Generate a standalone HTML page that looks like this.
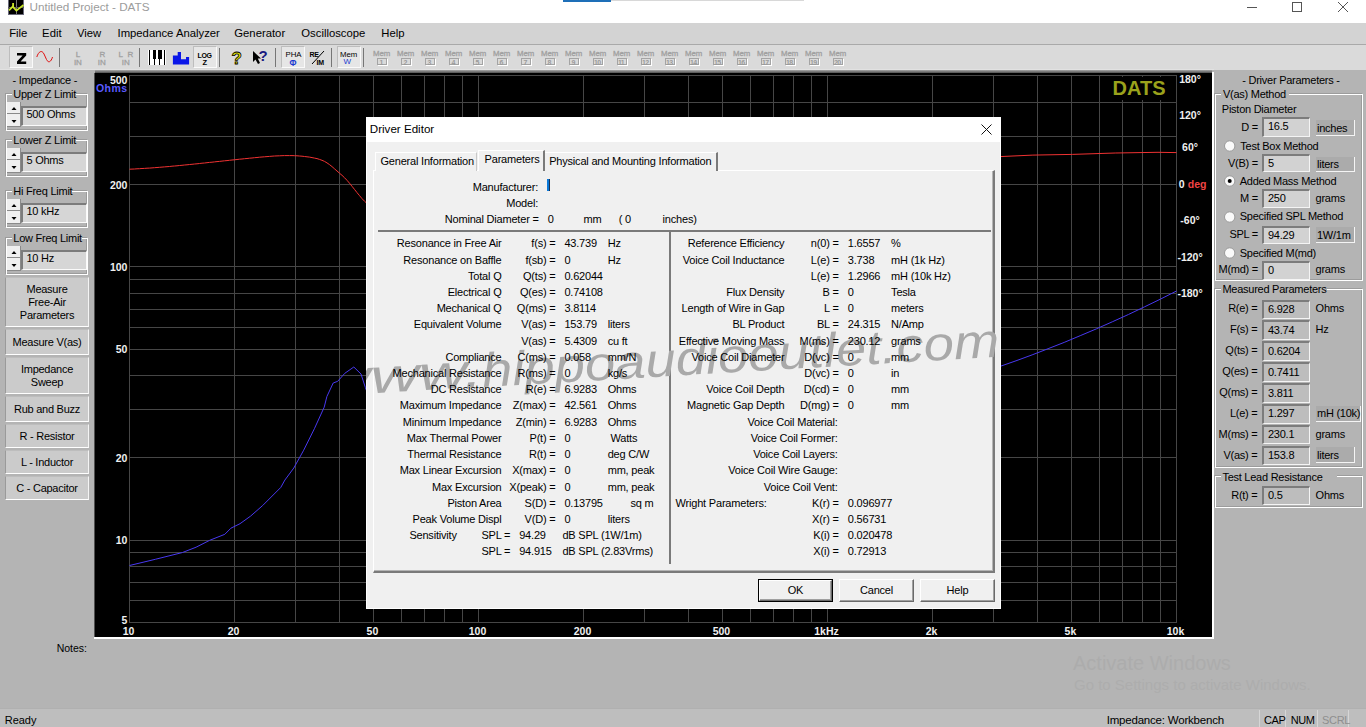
<!DOCTYPE html><html><head><meta charset="utf-8"><style>
html,body{margin:0;padding:0;}
body{width:1366px;height:727px;overflow:hidden;position:relative;background:#b4b4b4;font-family:"Liberation Sans",sans-serif;}
.t{position:absolute;white-space:nowrap;line-height:1;}
.r{position:absolute;box-sizing:border-box;}
svg{position:absolute;}
</style></head><body>
<div class="r" style="left:0px;top:0px;width:1366px;height:23px;background:#fff;"></div>
<svg style="left:8px;top:0px" width="16" height="15"><rect x="0.5" y="-1" width="15" height="15.5" fill="#000" stroke="#6a6a7a" stroke-width="1"/><line x1="8.5" y1="0" x2="8.5" y2="14" stroke="#777" stroke-width="1"/><line x1="0" y1="7.5" x2="16" y2="7.5" stroke="#555" stroke-width="1"/><polyline points="1,10.3 4.7,6.6 8.4,10.6 15.5,5" fill="none" stroke="#c8e628" stroke-width="1.7"/><rect x="4.2" y="3" width="1.8" height="4" fill="#c8e628"/></svg>
<div class="t" style="top:1.40px;font-size:11.7px;color:#9c9c9c;left:29.50px;">Untitled Project - DATS</div>
<div class="r" style="left:563px;top:0px;width:48px;height:2px;background:#1e6fb8;"></div>
<div class="r" style="left:611px;top:0px;width:193px;height:1px;background:#d8d8d8;"></div>
<svg style="left:1240px;top:0px" width="120" height="16"><line x1="7" y1="7.5" x2="17" y2="7.5" stroke="#555" stroke-width="1"/><rect x="52.5" y="2.5" width="9" height="9" fill="none" stroke="#555" stroke-width="1"/><line x1="98" y1="2" x2="108" y2="12" stroke="#555" stroke-width="1"/><line x1="108" y1="2" x2="98" y2="12" stroke="#555" stroke-width="1"/></svg>
<div class="r" style="left:0px;top:23px;width:1366px;height:21px;background:#d3d3d3;"></div>
<div class="r" style="left:0px;top:44px;width:1366px;height:1px;background:#a9a9a9;"></div>
<div class="t" style="top:27.83px;font-size:11.3px;color:#000;left:9.20px;">File</div>
<div class="t" style="top:27.83px;font-size:11.3px;color:#000;left:42.10px;">Edit</div>
<div class="t" style="top:27.83px;font-size:11.3px;color:#000;left:76.90px;">View</div>
<div class="t" style="top:27.83px;font-size:11.3px;color:#000;left:117.50px;">Impedance Analyzer</div>
<div class="t" style="top:27.83px;font-size:11.3px;color:#000;left:234.30px;">Generator</div>
<div class="t" style="top:27.83px;font-size:11.3px;color:#000;left:301.30px;">Oscilloscope</div>
<div class="t" style="top:27.83px;font-size:11.3px;color:#000;left:381.30px;">Help</div>
<div class="r" style="left:0px;top:45px;width:1366px;height:25px;background:#dadada;"></div>
<div class="r" style="left:0px;top:69px;width:1214px;height:1px;background:#e2e2e2;"></div>
<div class="r" style="left:9px;top:46px;width:24px;height:22px;background:#e6e6e6;border-top:1px solid #bdbdbd;border-left:1px solid #bdbdbd;border-right:1px solid #fafafa;border-bottom:1px solid #fafafa;"></div>
<svg style="left:16px;top:52px" width="12" height="13"><path d="M1,1 L10.2,1 L10.2,3.6 L4.6,9.6 L10.2,9.6 L10.2,12 L1,12 L1,9.4 L6.6,3.4 L1,3.4 Z" fill="#000"/></svg>
<svg style="left:36px;top:50px" width="18" height="14"><path d="M0.8,7 C2.5,1.5 5.8,-0.5 8,4 L10.5,9.5 C12.5,13.5 15,12 16.5,7" fill="none" stroke="#e01010" stroke-width="1"/></svg>
<div class="r" style="left:59px;top:48px;width:1px;height:19px;background:#767676;"></div>
<div class="t" style="top:50.63px;font-size:8px;color:#a0a0a0;left:75.80px;-webkit-text-stroke:0.3px #a0a0a0;">L</div>
<div class="t" style="top:58.53px;font-size:8px;color:#a0a0a0;left:73.90px;-webkit-text-stroke:0.3px #a0a0a0;">IN</div>
<div class="t" style="top:50.63px;font-size:8px;color:#a0a0a0;left:99.50px;-webkit-text-stroke:0.3px #a0a0a0;">R</div>
<div class="t" style="top:58.53px;font-size:8px;color:#a0a0a0;left:97.70px;-webkit-text-stroke:0.3px #a0a0a0;">IN</div>
<div class="t" style="top:50.63px;font-size:8px;color:#a0a0a0;left:118.50px;-webkit-text-stroke:0.3px #a0a0a0;">L&nbsp;&nbsp;R</div>
<div class="t" style="top:58.53px;font-size:8px;color:#a0a0a0;left:121.70px;-webkit-text-stroke:0.3px #a0a0a0;">IN</div>
<div class="r" style="left:139px;top:48px;width:1px;height:19px;background:#767676;"></div>
<svg style="left:148px;top:49px" width="18" height="17" shape-rendering="crispEdges"><rect x="0" y="1" width="18" height="15" fill="#fff"/><rect x="0.7" y="1" width="1.5" height="15" fill="#000"/><rect x="15.5" y="1" width="1.8" height="15" fill="#000"/><rect x="5" y="1" width="3.3" height="9" fill="#000"/><rect x="10.2" y="1" width="3.3" height="9" fill="#000"/><rect x="6.2" y="9" width="1" height="7" fill="#000"/><rect x="11.4" y="9" width="1" height="7" fill="#000"/></svg>
<svg style="left:172px;top:51px" width="18" height="15"><path d="M0.9,13.5 L0.9,4.4 L5.7,4.4 L5.7,1.1 L9,1.1 L9,8.2 L14,8.2 L14,5.9 L17.1,5.9 L17.1,13.5 Z" fill="#0a16e8"/></svg>
<div class="r" style="left:193px;top:46px;width:24px;height:22px;background:#e6e6e6;border-top:1px solid #bdbdbd;border-left:1px solid #bdbdbd;border-right:1px solid #fafafa;border-bottom:1px solid #fafafa;"></div>
<div class="t" style="top:52.27px;font-size:7px;color:#000;font-weight:700;letter-spacing:-0.3px;left:197.50px;">LOG</div>
<div class="t" style="top:58.75px;font-size:7.5px;color:#000;font-weight:700;left:202.50px;">Z</div>
<div class="r" style="left:219px;top:48px;width:1px;height:19px;background:#767676;"></div>
<div class="t" style="top:49.51px;font-size:17px;color:#e6e600;font-weight:700;left:231.50px;-webkit-text-stroke:0.8px #000;">?</div>
<svg style="left:252px;top:50px" width="17" height="15"><path d="M1,1 L1,12 L3.5,9.5 L6,14 L8,13 L5.8,8.5 L9,8.5 Z" fill="#000"/></svg>
<div class="t" style="top:48.30px;font-size:15px;color:#1a1a80;font-weight:700;left:258.50px;">?</div>
<div class="r" style="left:275px;top:48px;width:1px;height:19px;background:#767676;"></div>
<div class="r" style="left:281px;top:46px;width:24px;height:22px;background:#e6e6e6;border-top:1px solid #bdbdbd;border-left:1px solid #bdbdbd;border-right:1px solid #fafafa;border-bottom:1px solid #fafafa;"></div>
<div class="t" style="top:51.10px;font-size:7.8px;color:#000;left:285.50px;">PHA</div>
<div class="t" style="top:58.50px;font-size:8.5px;color:#1a3ad0;font-weight:700;left:289.50px;">Φ</div>
<svg style="left:309px;top:50px" width="18" height="16"><line x1="3" y1="14" x2="15" y2="1" stroke="#000" stroke-width="1"/></svg>
<div class="t" style="top:51.37px;font-size:7px;color:#000;font-weight:700;letter-spacing:-0.3px;left:309.50px;">RE</div>
<div class="t" style="top:59.17px;font-size:7px;color:#000;font-weight:700;letter-spacing:-0.3px;left:316.50px;">IM</div>
<div class="r" style="left:331px;top:48px;width:1px;height:19px;background:#767676;"></div>
<div class="r" style="left:337px;top:46px;width:24px;height:22px;background:#e6e6e6;border-top:1px solid #bdbdbd;border-left:1px solid #bdbdbd;border-right:1px solid #fafafa;border-bottom:1px solid #fafafa;"></div>
<div class="t" style="top:51.10px;font-size:7.8px;color:#000;left:340.00px;">Mem</div>
<div class="t" style="top:58.33px;font-size:8px;color:#1a3ad0;left:343.50px;">W</div>
<div class="r" style="left:363px;top:48px;width:1px;height:19px;background:#767676;"></div>
<div class="t" style="top:49.90px;font-size:7.8px;color:#a0a0a0;left:372.90px;-webkit-text-stroke:0.3px #a0a0a0;">Mem</div>
<div class="r" style="left:376.9px;top:57.8px;width:10px;height:7px;border:1px solid #a4a4a4;box-shadow:1px 1px 0 #fff;"></div>
<div class="t" style="top:58.77px;font-size:7px;color:#9a9a9a;font-weight:700;letter-spacing:-0.6px;left:379.50px;">1</div>
<div class="t" style="top:49.90px;font-size:7.8px;color:#a0a0a0;left:396.90px;-webkit-text-stroke:0.3px #a0a0a0;">Mem</div>
<div class="r" style="left:400.9px;top:57.8px;width:10px;height:7px;border:1px solid #a4a4a4;box-shadow:1px 1px 0 #fff;"></div>
<div class="t" style="top:58.77px;font-size:7px;color:#9a9a9a;font-weight:700;letter-spacing:-0.6px;left:403.50px;">2</div>
<div class="t" style="top:49.90px;font-size:7.8px;color:#a0a0a0;left:420.90px;-webkit-text-stroke:0.3px #a0a0a0;">Mem</div>
<div class="r" style="left:424.9px;top:57.8px;width:10px;height:7px;border:1px solid #a4a4a4;box-shadow:1px 1px 0 #fff;"></div>
<div class="t" style="top:58.77px;font-size:7px;color:#9a9a9a;font-weight:700;letter-spacing:-0.6px;left:427.50px;">3</div>
<div class="t" style="top:49.90px;font-size:7.8px;color:#a0a0a0;left:444.90px;-webkit-text-stroke:0.3px #a0a0a0;">Mem</div>
<div class="r" style="left:448.9px;top:57.8px;width:10px;height:7px;border:1px solid #a4a4a4;box-shadow:1px 1px 0 #fff;"></div>
<div class="t" style="top:58.77px;font-size:7px;color:#9a9a9a;font-weight:700;letter-spacing:-0.6px;left:451.50px;">4</div>
<div class="t" style="top:49.90px;font-size:7.8px;color:#a0a0a0;left:468.90px;-webkit-text-stroke:0.3px #a0a0a0;">Mem</div>
<div class="r" style="left:472.9px;top:57.8px;width:10px;height:7px;border:1px solid #a4a4a4;box-shadow:1px 1px 0 #fff;"></div>
<div class="t" style="top:58.77px;font-size:7px;color:#9a9a9a;font-weight:700;letter-spacing:-0.6px;left:475.50px;">5</div>
<div class="t" style="top:49.90px;font-size:7.8px;color:#a0a0a0;left:492.90px;-webkit-text-stroke:0.3px #a0a0a0;">Mem</div>
<div class="r" style="left:496.9px;top:57.8px;width:10px;height:7px;border:1px solid #a4a4a4;box-shadow:1px 1px 0 #fff;"></div>
<div class="t" style="top:58.77px;font-size:7px;color:#9a9a9a;font-weight:700;letter-spacing:-0.6px;left:499.50px;">6</div>
<div class="t" style="top:49.90px;font-size:7.8px;color:#a0a0a0;left:516.90px;-webkit-text-stroke:0.3px #a0a0a0;">Mem</div>
<div class="r" style="left:520.9px;top:57.8px;width:10px;height:7px;border:1px solid #a4a4a4;box-shadow:1px 1px 0 #fff;"></div>
<div class="t" style="top:58.77px;font-size:7px;color:#9a9a9a;font-weight:700;letter-spacing:-0.6px;left:523.50px;">7</div>
<div class="t" style="top:49.90px;font-size:7.8px;color:#a0a0a0;left:540.90px;-webkit-text-stroke:0.3px #a0a0a0;">Mem</div>
<div class="r" style="left:544.9px;top:57.8px;width:10px;height:7px;border:1px solid #a4a4a4;box-shadow:1px 1px 0 #fff;"></div>
<div class="t" style="top:58.77px;font-size:7px;color:#9a9a9a;font-weight:700;letter-spacing:-0.6px;left:547.50px;">8</div>
<div class="t" style="top:49.90px;font-size:7.8px;color:#a0a0a0;left:564.90px;-webkit-text-stroke:0.3px #a0a0a0;">Mem</div>
<div class="r" style="left:568.9px;top:57.8px;width:10px;height:7px;border:1px solid #a4a4a4;box-shadow:1px 1px 0 #fff;"></div>
<div class="t" style="top:58.77px;font-size:7px;color:#9a9a9a;font-weight:700;letter-spacing:-0.6px;left:571.50px;">9</div>
<div class="t" style="top:49.90px;font-size:7.8px;color:#a0a0a0;left:588.90px;-webkit-text-stroke:0.3px #a0a0a0;">Mem</div>
<div class="r" style="left:592.9px;top:57.8px;width:10px;height:7px;border:1px solid #a4a4a4;box-shadow:1px 1px 0 #fff;"></div>
<div class="t" style="top:58.77px;font-size:7px;color:#9a9a9a;font-weight:700;letter-spacing:-0.6px;left:593.90px;">10</div>
<div class="t" style="top:49.90px;font-size:7.8px;color:#a0a0a0;left:612.90px;-webkit-text-stroke:0.3px #a0a0a0;">Mem</div>
<div class="r" style="left:616.9px;top:57.8px;width:10px;height:7px;border:1px solid #a4a4a4;box-shadow:1px 1px 0 #fff;"></div>
<div class="t" style="top:58.77px;font-size:7px;color:#9a9a9a;font-weight:700;letter-spacing:-0.6px;left:617.90px;">11</div>
<div class="t" style="top:49.90px;font-size:7.8px;color:#a0a0a0;left:636.90px;-webkit-text-stroke:0.3px #a0a0a0;">Mem</div>
<div class="r" style="left:640.9px;top:57.8px;width:10px;height:7px;border:1px solid #a4a4a4;box-shadow:1px 1px 0 #fff;"></div>
<div class="t" style="top:58.77px;font-size:7px;color:#9a9a9a;font-weight:700;letter-spacing:-0.6px;left:641.90px;">12</div>
<div class="t" style="top:49.90px;font-size:7.8px;color:#a0a0a0;left:660.90px;-webkit-text-stroke:0.3px #a0a0a0;">Mem</div>
<div class="r" style="left:664.9px;top:57.8px;width:10px;height:7px;border:1px solid #a4a4a4;box-shadow:1px 1px 0 #fff;"></div>
<div class="t" style="top:58.77px;font-size:7px;color:#9a9a9a;font-weight:700;letter-spacing:-0.6px;left:665.90px;">13</div>
<div class="t" style="top:49.90px;font-size:7.8px;color:#a0a0a0;left:684.90px;-webkit-text-stroke:0.3px #a0a0a0;">Mem</div>
<div class="r" style="left:688.9px;top:57.8px;width:10px;height:7px;border:1px solid #a4a4a4;box-shadow:1px 1px 0 #fff;"></div>
<div class="t" style="top:58.77px;font-size:7px;color:#9a9a9a;font-weight:700;letter-spacing:-0.6px;left:689.90px;">14</div>
<div class="t" style="top:49.90px;font-size:7.8px;color:#a0a0a0;left:708.90px;-webkit-text-stroke:0.3px #a0a0a0;">Mem</div>
<div class="r" style="left:712.9px;top:57.8px;width:10px;height:7px;border:1px solid #a4a4a4;box-shadow:1px 1px 0 #fff;"></div>
<div class="t" style="top:58.77px;font-size:7px;color:#9a9a9a;font-weight:700;letter-spacing:-0.6px;left:713.90px;">15</div>
<div class="t" style="top:49.90px;font-size:7.8px;color:#a0a0a0;left:732.90px;-webkit-text-stroke:0.3px #a0a0a0;">Mem</div>
<div class="r" style="left:736.9px;top:57.8px;width:10px;height:7px;border:1px solid #a4a4a4;box-shadow:1px 1px 0 #fff;"></div>
<div class="t" style="top:58.77px;font-size:7px;color:#9a9a9a;font-weight:700;letter-spacing:-0.6px;left:737.90px;">16</div>
<div class="t" style="top:49.90px;font-size:7.8px;color:#a0a0a0;left:756.90px;-webkit-text-stroke:0.3px #a0a0a0;">Mem</div>
<div class="r" style="left:760.9px;top:57.8px;width:10px;height:7px;border:1px solid #a4a4a4;box-shadow:1px 1px 0 #fff;"></div>
<div class="t" style="top:58.77px;font-size:7px;color:#9a9a9a;font-weight:700;letter-spacing:-0.6px;left:761.90px;">17</div>
<div class="t" style="top:49.90px;font-size:7.8px;color:#a0a0a0;left:780.90px;-webkit-text-stroke:0.3px #a0a0a0;">Mem</div>
<div class="r" style="left:784.9px;top:57.8px;width:10px;height:7px;border:1px solid #a4a4a4;box-shadow:1px 1px 0 #fff;"></div>
<div class="t" style="top:58.77px;font-size:7px;color:#9a9a9a;font-weight:700;letter-spacing:-0.6px;left:785.90px;">18</div>
<div class="t" style="top:49.90px;font-size:7.8px;color:#a0a0a0;left:804.90px;-webkit-text-stroke:0.3px #a0a0a0;">Mem</div>
<div class="r" style="left:808.9px;top:57.8px;width:10px;height:7px;border:1px solid #a4a4a4;box-shadow:1px 1px 0 #fff;"></div>
<div class="t" style="top:58.77px;font-size:7px;color:#9a9a9a;font-weight:700;letter-spacing:-0.6px;left:809.90px;">19</div>
<div class="t" style="top:49.90px;font-size:7.8px;color:#a0a0a0;left:828.90px;-webkit-text-stroke:0.3px #a0a0a0;">Mem</div>
<div class="r" style="left:832.9px;top:57.8px;width:10px;height:7px;border:1px solid #a4a4a4;box-shadow:1px 1px 0 #fff;"></div>
<div class="t" style="top:58.77px;font-size:7px;color:#9a9a9a;font-weight:700;letter-spacing:-0.6px;left:833.90px;">20</div>
<div class="r" style="left:0px;top:708px;width:1366px;height:1px;background:#b0b0b0;"></div>
<div class="r" style="left:0px;top:709px;width:1366px;height:18px;background:#bebebe;"></div>
<div class="t" style="top:714.69px;font-size:11px;color:#000;left:4.70px;">Ready</div>
<div class="t" style="top:715.07px;font-size:11.5px;color:#000;letter-spacing:-0.2px;left:1106.70px;">Impedance: Workbench</div>
<div class="r" style="left:1259px;top:710px;width:1px;height:17px;background:#d6d6d6;"></div>
<div class="r" style="left:1285px;top:710px;width:1px;height:17px;background:#d6d6d6;"></div>
<div class="r" style="left:1317px;top:710px;width:1px;height:17px;background:#d6d6d6;"></div>
<div class="r" style="left:1348px;top:710px;width:1px;height:17px;background:#d6d6d6;"></div>
<div class="t" style="top:715.49px;font-size:11px;color:#000;letter-spacing:-0.4px;left:1264.00px;">CAP</div>
<div class="t" style="top:715.49px;font-size:11px;color:#000;letter-spacing:-0.4px;left:1290.70px;">NUM</div>
<div class="t" style="top:715.49px;font-size:11px;color:#8e8e8e;letter-spacing:-0.3px;left:1322.00px;">SCRL</div>
<div class="t" style="top:643.21px;font-size:10.5px;color:#000;left:56.70px;">Notes:</div>
<div class="t" style="top:652.57px;font-size:20px;color:#acacac;left:1073.00px;">Activate Windows</div>
<div class="t" style="top:677.00px;font-size:15px;color:#adadad;left:1074.00px;">Go to Settings to activate Windows.</div>
<div class="r" style="left:95px;top:70px;width:1117px;height:3px;background:linear-gradient(#a8a8a8,#505050);"></div>
<div class="r" style="left:94px;top:73px;width:1118px;height:564px;background:#000;border-left:1px solid #505050;"></div>
<div class="r" style="left:1212px;top:72px;width:2px;height:567px;background:#fff;"></div>
<div class="r" style="left:94px;top:637px;width:1120px;height:2px;background:#fff;"></div>
<svg style="left:0;top:0" width="1366" height="727" shape-rendering="crispEdges"><line x1="129.5" y1="75" x2="129.5" y2="623" stroke="#464646" stroke-width="1"/><line x1="234.5" y1="75" x2="234.5" y2="623" stroke="#464646" stroke-width="1"/><line x1="295.5" y1="75" x2="295.5" y2="623" stroke="#464646" stroke-width="1"/><line x1="339.5" y1="75" x2="339.5" y2="623" stroke="#464646" stroke-width="1"/><line x1="373.5" y1="75" x2="373.5" y2="623" stroke="#464646" stroke-width="1"/><line x1="401.5" y1="75" x2="401.5" y2="623" stroke="#464646" stroke-width="1"/><line x1="424.5" y1="75" x2="424.5" y2="623" stroke="#464646" stroke-width="1"/><line x1="444.5" y1="75" x2="444.5" y2="623" stroke="#464646" stroke-width="1"/><line x1="462.5" y1="75" x2="462.5" y2="623" stroke="#464646" stroke-width="1"/><line x1="478.5" y1="75" x2="478.5" y2="623" stroke="#464646" stroke-width="1"/><line x1="583.5" y1="75" x2="583.5" y2="623" stroke="#464646" stroke-width="1"/><line x1="644.5" y1="75" x2="644.5" y2="623" stroke="#464646" stroke-width="1"/><line x1="688.5" y1="75" x2="688.5" y2="623" stroke="#464646" stroke-width="1"/><line x1="722.5" y1="75" x2="722.5" y2="623" stroke="#464646" stroke-width="1"/><line x1="750.5" y1="75" x2="750.5" y2="623" stroke="#464646" stroke-width="1"/><line x1="773.5" y1="75" x2="773.5" y2="623" stroke="#464646" stroke-width="1"/><line x1="793.5" y1="75" x2="793.5" y2="623" stroke="#464646" stroke-width="1"/><line x1="811.5" y1="75" x2="811.5" y2="623" stroke="#464646" stroke-width="1"/><line x1="827.5" y1="75" x2="827.5" y2="623" stroke="#464646" stroke-width="1"/><line x1="932.5" y1="75" x2="932.5" y2="623" stroke="#464646" stroke-width="1"/><line x1="993.5" y1="75" x2="993.5" y2="623" stroke="#464646" stroke-width="1"/><line x1="1037.5" y1="75" x2="1037.5" y2="623" stroke="#464646" stroke-width="1"/><line x1="1071.5" y1="75" x2="1071.5" y2="623" stroke="#464646" stroke-width="1"/><line x1="1099.5" y1="75" x2="1099.5" y2="623" stroke="#464646" stroke-width="1"/><line x1="1122.5" y1="75" x2="1122.5" y2="623" stroke="#464646" stroke-width="1"/><line x1="1142.5" y1="75" x2="1142.5" y2="623" stroke="#464646" stroke-width="1"/><line x1="1160.5" y1="75" x2="1160.5" y2="623" stroke="#464646" stroke-width="1"/><line x1="1176.5" y1="75" x2="1176.5" y2="623" stroke="#464646" stroke-width="1"/><line x1="129" y1="75.5" x2="1177" y2="75.5" stroke="#464646" stroke-width="1"/><line x1="129" y1="102.5" x2="1177" y2="102.5" stroke="#464646" stroke-width="1"/><line x1="129" y1="136.5" x2="1177" y2="136.5" stroke="#464646" stroke-width="1"/><line x1="129" y1="184.5" x2="1177" y2="184.5" stroke="#464646" stroke-width="1"/><line x1="129" y1="266.5" x2="1177" y2="266.5" stroke="#464646" stroke-width="1"/><line x1="129" y1="279.5" x2="1177" y2="279.5" stroke="#464646" stroke-width="1"/><line x1="129" y1="293.5" x2="1177" y2="293.5" stroke="#464646" stroke-width="1"/><line x1="129" y1="309.5" x2="1177" y2="309.5" stroke="#464646" stroke-width="1"/><line x1="129" y1="327.5" x2="1177" y2="327.5" stroke="#464646" stroke-width="1"/><line x1="129" y1="349.5" x2="1177" y2="349.5" stroke="#464646" stroke-width="1"/><line x1="129" y1="375.5" x2="1177" y2="375.5" stroke="#464646" stroke-width="1"/><line x1="129" y1="409.5" x2="1177" y2="409.5" stroke="#464646" stroke-width="1"/><line x1="129" y1="457.5" x2="1177" y2="457.5" stroke="#464646" stroke-width="1"/><line x1="129" y1="540.5" x2="1177" y2="540.5" stroke="#464646" stroke-width="1"/><line x1="129" y1="552.5" x2="1177" y2="552.5" stroke="#464646" stroke-width="1"/><line x1="129" y1="566.5" x2="1177" y2="566.5" stroke="#464646" stroke-width="1"/><line x1="129" y1="582.5" x2="1177" y2="582.5" stroke="#464646" stroke-width="1"/><line x1="129" y1="600.5" x2="1177" y2="600.5" stroke="#464646" stroke-width="1"/><line x1="129" y1="622.5" x2="1177" y2="622.5" stroke="#464646" stroke-width="1"/></svg>
<div class="r" style="left:1106px;top:77px;width:70px;height:23px;background:#000;"></div>
<div class="t" style="top:78.47px;font-size:20px;color:#9aa21c;font-weight:700;left:1112.60px;">DATS</div>
<svg style="left:0;top:0" width="1366" height="727"><polyline points="129.5,565.5 155.3,559.3 182.5,552.5 196.1,547.2 209.7,540.3 224.8,534.3 230.9,528.2 240.0,523.7 250.6,516.1 262.7,505.5 270.2,498.0 280.8,487.4 284.9,480.0 293.8,468.0 303.7,450.2 314.4,428.7 324.2,407.2 326.9,396.5 333.2,383.0 337.7,381.3 344.8,373.3 353.8,367.0 361.0,374.0 365.4,387.6 367.0,392.0" fill="none" stroke="#4838f0" stroke-width="1"/><polyline points="1000.0,366.4 1016.0,360.8 1032.1,354.9 1048.1,348.7 1064.2,342.4 1080.2,335.7 1096.3,328.9 1112.3,321.8 1128.4,314.5 1144.4,306.9 1160.5,299.1 1176.5,291.0" fill="none" stroke="#4838f0" stroke-width="1"/><polyline points="129.5,169.2 132.0,169.1 134.5,169.0 137.0,168.8 139.5,168.7 142.0,168.5 144.5,168.4 147.0,168.2 149.5,168.1 152.0,167.9 154.5,167.7 157.0,167.5 159.5,167.3 162.0,167.1 164.5,166.9 167.0,166.7 169.5,166.5 172.0,166.2 174.5,166.0 177.0,165.8 179.5,165.5 182.0,165.3 184.5,165.0 187.0,164.8 189.5,164.5 192.0,164.3 194.5,164.0 197.0,163.8 199.5,163.5 202.0,163.2 204.5,163.0 207.0,162.7 209.5,162.4 212.0,162.2 214.5,161.9 217.0,161.6 219.5,161.4 222.0,161.1 224.5,160.8 227.0,160.6 229.5,160.3 232.0,160.0 234.5,159.8 237.0,159.5 239.5,159.2 242.0,159.0 244.5,158.7 247.0,158.5 249.5,158.2 252.0,158.0 254.5,157.7 257.0,157.5 259.5,157.2 262.0,157.0 264.5,156.8 267.0,156.6 269.5,156.4 272.0,156.2 274.5,156.0 277.0,155.9 279.5,155.8 282.0,155.7 284.5,155.6 287.0,155.6 289.5,155.6 292.0,155.6 294.5,155.7 297.0,155.8 299.5,156.0 302.0,156.2 304.5,156.5 307.0,156.8 309.5,157.1 312.0,157.6 314.5,158.1 317.0,158.6 319.5,159.4 322.0,160.3 324.5,161.4 327.0,162.9 329.5,164.6 332.0,166.6 334.5,168.8 337.0,171.0 339.5,173.2 342.0,175.3 344.5,177.7 347.0,180.3 349.5,183.2 352.0,186.3 354.5,189.4 357.0,192.6 359.5,195.6 362.0,198.6 364.5,201.2 367.0,203.5" fill="none" stroke="#f03232" stroke-width="1"/><polyline points="1000.0,156.6 1032.9,155.1 1072.3,154.4 1115.2,153.0 1158.0,152.3 1176.5,152.6" fill="none" stroke="#f03232" stroke-width="1"/></svg>
<div class="t" style="top:75.36px;font-size:10.5px;color:#f0f0f0;font-weight:700;right:1238.60px;">500</div>
<div class="t" style="top:179.70px;font-size:10.5px;color:#f0f0f0;font-weight:700;right:1238.60px;">200</div>
<div class="t" style="top:261.96px;font-size:10.5px;color:#f0f0f0;font-weight:700;right:1238.60px;">100</div>
<div class="t" style="top:344.21px;font-size:10.5px;color:#f0f0f0;font-weight:700;right:1238.60px;">50</div>
<div class="t" style="top:452.95px;font-size:10.5px;color:#f0f0f0;font-weight:700;right:1238.60px;">20</div>
<div class="t" style="top:535.21px;font-size:10.5px;color:#f0f0f0;font-weight:700;right:1238.60px;">10</div>
<div class="t" style="top:615.46px;font-size:10.5px;color:#f0f0f0;font-weight:700;right:1238.60px;">5</div>
<div class="t" style="top:82.81px;font-size:10.5px;color:#5a5aff;font-weight:700;letter-spacing:0.4px;right:1238.60px;">Ohms</div>
<div class="t" style="top:625.61px;font-size:10.5px;color:#f0f0f0;font-weight:700;left:-171.50px;width:600px;text-align:center;">10</div>
<div class="t" style="top:625.61px;font-size:10.5px;color:#f0f0f0;font-weight:700;left:-66.44px;width:600px;text-align:center;">20</div>
<div class="t" style="top:625.61px;font-size:10.5px;color:#f0f0f0;font-weight:700;left:72.44px;width:600px;text-align:center;">50</div>
<div class="t" style="top:625.61px;font-size:10.5px;color:#f0f0f0;font-weight:700;left:177.50px;width:600px;text-align:center;">100</div>
<div class="t" style="top:625.61px;font-size:10.5px;color:#f0f0f0;font-weight:700;left:282.56px;width:600px;text-align:center;">200</div>
<div class="t" style="top:625.61px;font-size:10.5px;color:#f0f0f0;font-weight:700;left:421.44px;width:600px;text-align:center;">500</div>
<div class="t" style="top:625.61px;font-size:10.5px;color:#f0f0f0;font-weight:700;left:526.50px;width:600px;text-align:center;">1kHz</div>
<div class="t" style="top:625.61px;font-size:10.5px;color:#f0f0f0;font-weight:700;left:631.56px;width:600px;text-align:center;">2k</div>
<div class="t" style="top:625.61px;font-size:10.5px;color:#f0f0f0;font-weight:700;left:770.44px;width:600px;text-align:center;">5k</div>
<div class="t" style="top:625.61px;font-size:10.5px;color:#f0f0f0;font-weight:700;left:875.50px;width:600px;text-align:center;">10k</div>
<div class="t" style="top:73.81px;font-size:10.5px;color:#f0f0f0;font-weight:700;left:890.00px;width:600px;text-align:center;">180°</div>
<div class="t" style="top:110.31px;font-size:10.5px;color:#f0f0f0;font-weight:700;left:890.00px;width:600px;text-align:center;">120°</div>
<div class="t" style="top:141.81px;font-size:10.5px;color:#f0f0f0;font-weight:700;left:890.00px;width:600px;text-align:center;">60°</div>
<div class="t" style="top:215.01px;font-size:10.5px;color:#f0f0f0;font-weight:700;left:890.00px;width:600px;text-align:center;">-60°</div>
<div class="t" style="top:251.51px;font-size:10.5px;color:#f0f0f0;font-weight:700;left:890.00px;width:600px;text-align:center;">-120°</div>
<div class="t" style="top:287.61px;font-size:10.5px;color:#f0f0f0;font-weight:700;left:890.00px;width:600px;text-align:center;">-180°</div>
<div class="t" style="top:178.51px;font-size:10.5px;color:#f0f0f0;font-weight:700;left:1178.80px;">0</div>
<div class="t" style="top:178.51px;font-size:10.5px;color:#f04444;font-weight:700;left:1187.80px;">deg</div>
<div class="t" style="top:75.19px;font-size:11px;color:#000;letter-spacing:-0.25px;left:-255.10px;width:600px;text-align:center;">- Impedance -</div>
<div class="r" style="left:5px;top:93px;width:82px;height:37px;border:1px solid #9c9c9c;"></div>
<div class="r" style="left:6px;top:94px;width:82px;height:37px;border:1px solid #fff;"></div>
<div class="r" style="left:12px;top:89px;width:64px;height:11px;background:#b4b4b4;"></div>
<div class="t" style="top:88.59px;font-size:11px;color:#000;letter-spacing:-0.25px;left:13.30px;">Upper Z Limit</div>
<div class="r" style="left:21px;top:106px;width:66px;height:20px;background:#d6d6d6;border-top:2px solid #7c7c7c;border-left:2px solid #7c7c7c;border-bottom:1px solid #fafafa;border-right:1px solid #fafafa;"></div>
<div class="t" style="top:109.19px;font-size:11px;color:#000;letter-spacing:-0.25px;left:26.50px;">500 Ohms</div>
<div class="r" style="left:7px;top:102px;width:14px;height:12px;background:#efefef;border-bottom:1px solid #8a8a8a;border-right:1px solid #8a8a8a;"></div>
<div class="r" style="left:7px;top:114px;width:14px;height:13px;background:#efefef;border-bottom:1px solid #8a8a8a;border-right:1px solid #8a8a8a;"></div>
<svg style="left:7px;top:102px" width="14" height="25"><path d="M4.5,8 L9.5,8 L7,5 Z" fill="#000"/><path d="M4.5,18 L9.5,18 L7,21 Z" fill="#000"/></svg>
<div class="r" style="left:5px;top:139px;width:82px;height:37px;border:1px solid #9c9c9c;"></div>
<div class="r" style="left:6px;top:140px;width:82px;height:37px;border:1px solid #fff;"></div>
<div class="r" style="left:12px;top:135px;width:64px;height:11px;background:#b4b4b4;"></div>
<div class="t" style="top:134.59px;font-size:11px;color:#000;letter-spacing:-0.25px;left:13.30px;">Lower Z Limit</div>
<div class="r" style="left:21px;top:152px;width:66px;height:20px;background:#d6d6d6;border-top:2px solid #7c7c7c;border-left:2px solid #7c7c7c;border-bottom:1px solid #fafafa;border-right:1px solid #fafafa;"></div>
<div class="t" style="top:155.19px;font-size:11px;color:#000;letter-spacing:-0.25px;left:26.50px;">5 Ohms</div>
<div class="r" style="left:7px;top:148px;width:14px;height:12px;background:#efefef;border-bottom:1px solid #8a8a8a;border-right:1px solid #8a8a8a;"></div>
<div class="r" style="left:7px;top:160px;width:14px;height:13px;background:#efefef;border-bottom:1px solid #8a8a8a;border-right:1px solid #8a8a8a;"></div>
<svg style="left:7px;top:148px" width="14" height="25"><path d="M4.5,8 L9.5,8 L7,5 Z" fill="#000"/><path d="M4.5,18 L9.5,18 L7,21 Z" fill="#000"/></svg>
<div class="r" style="left:5px;top:190px;width:82px;height:37px;border:1px solid #9c9c9c;"></div>
<div class="r" style="left:6px;top:191px;width:82px;height:37px;border:1px solid #fff;"></div>
<div class="r" style="left:12px;top:186px;width:60px;height:11px;background:#b4b4b4;"></div>
<div class="t" style="top:185.59px;font-size:11px;color:#000;letter-spacing:-0.25px;left:13.30px;">Hi Freq Limit</div>
<div class="r" style="left:21px;top:203px;width:66px;height:20px;background:#d6d6d6;border-top:2px solid #7c7c7c;border-left:2px solid #7c7c7c;border-bottom:1px solid #fafafa;border-right:1px solid #fafafa;"></div>
<div class="t" style="top:206.19px;font-size:11px;color:#000;letter-spacing:-0.25px;left:26.50px;">10 kHz</div>
<div class="r" style="left:7px;top:199px;width:14px;height:12px;background:#efefef;border-bottom:1px solid #8a8a8a;border-right:1px solid #8a8a8a;"></div>
<div class="r" style="left:7px;top:211px;width:14px;height:13px;background:#efefef;border-bottom:1px solid #8a8a8a;border-right:1px solid #8a8a8a;"></div>
<svg style="left:7px;top:199px" width="14" height="25"><path d="M4.5,8 L9.5,8 L7,5 Z" fill="#000"/><path d="M4.5,18 L9.5,18 L7,21 Z" fill="#000"/></svg>
<div class="r" style="left:5px;top:237px;width:82px;height:37px;border:1px solid #9c9c9c;"></div>
<div class="r" style="left:6px;top:238px;width:82px;height:37px;border:1px solid #fff;"></div>
<div class="r" style="left:12px;top:233px;width:70px;height:11px;background:#b4b4b4;"></div>
<div class="t" style="top:232.59px;font-size:11px;color:#000;letter-spacing:-0.25px;left:13.30px;">Low Freq Limit</div>
<div class="r" style="left:21px;top:250px;width:66px;height:20px;background:#d6d6d6;border-top:2px solid #7c7c7c;border-left:2px solid #7c7c7c;border-bottom:1px solid #fafafa;border-right:1px solid #fafafa;"></div>
<div class="t" style="top:253.19px;font-size:11px;color:#000;letter-spacing:-0.25px;left:26.50px;">10 Hz</div>
<div class="r" style="left:7px;top:246px;width:14px;height:12px;background:#efefef;border-bottom:1px solid #8a8a8a;border-right:1px solid #8a8a8a;"></div>
<div class="r" style="left:7px;top:258px;width:14px;height:13px;background:#efefef;border-bottom:1px solid #8a8a8a;border-right:1px solid #8a8a8a;"></div>
<svg style="left:7px;top:246px" width="14" height="25"><path d="M4.5,8 L9.5,8 L7,5 Z" fill="#000"/><path d="M4.5,18 L9.5,18 L7,21 Z" fill="#000"/></svg>
<div class="r" style="left:5px;top:277px;width:84px;height:50px;background:#cbcbcb;border-left:1px solid #9a9a9a;border-top:1px solid #bdbdbd;border-right:1px solid #f4f4f4;border-bottom:1px solid #fff;"></div>
<div class="t" style="top:283.89px;font-size:11px;color:#000;letter-spacing:-0.25px;left:-253.00px;width:600px;text-align:center;">Measure</div>
<div class="t" style="top:296.69px;font-size:11px;color:#000;letter-spacing:-0.25px;left:-253.00px;width:600px;text-align:center;">Free-Air</div>
<div class="t" style="top:309.59px;font-size:11px;color:#000;letter-spacing:-0.25px;left:-253.00px;width:600px;text-align:center;">Parameters</div>
<div class="r" style="left:5px;top:329px;width:84px;height:26px;background:#cbcbcb;border-left:1px solid #9a9a9a;border-top:1px solid #bdbdbd;border-right:1px solid #f4f4f4;border-bottom:1px solid #fff;"></div>
<div class="t" style="top:337.19px;font-size:11px;color:#000;letter-spacing:-0.25px;left:-253.00px;width:600px;text-align:center;">Measure V(as)</div>
<div class="r" style="left:5px;top:357px;width:84px;height:37px;background:#cbcbcb;border-left:1px solid #9a9a9a;border-top:1px solid #bdbdbd;border-right:1px solid #f4f4f4;border-bottom:1px solid #fff;"></div>
<div class="t" style="top:364.19px;font-size:11px;color:#000;letter-spacing:-0.25px;left:-253.00px;width:600px;text-align:center;">Impedance</div>
<div class="t" style="top:376.69px;font-size:11px;color:#000;letter-spacing:-0.25px;left:-253.00px;width:600px;text-align:center;">Sweep</div>
<div class="r" style="left:5px;top:396px;width:84px;height:26px;background:#cbcbcb;border-left:1px solid #9a9a9a;border-top:1px solid #bdbdbd;border-right:1px solid #f4f4f4;border-bottom:1px solid #fff;"></div>
<div class="t" style="top:403.99px;font-size:11px;color:#000;letter-spacing:-0.25px;left:-253.00px;width:600px;text-align:center;">Rub and Buzz</div>
<div class="r" style="left:5px;top:424px;width:84px;height:24px;background:#cbcbcb;border-left:1px solid #9a9a9a;border-top:1px solid #bdbdbd;border-right:1px solid #f4f4f4;border-bottom:1px solid #fff;"></div>
<div class="t" style="top:431.09px;font-size:11px;color:#000;letter-spacing:-0.25px;left:-253.00px;width:600px;text-align:center;">R - Resistor</div>
<div class="r" style="left:5px;top:450px;width:84px;height:24px;background:#cbcbcb;border-left:1px solid #9a9a9a;border-top:1px solid #bdbdbd;border-right:1px solid #f4f4f4;border-bottom:1px solid #fff;"></div>
<div class="t" style="top:457.49px;font-size:11px;color:#000;letter-spacing:-0.25px;left:-253.00px;width:600px;text-align:center;">L - Inductor</div>
<div class="r" style="left:5px;top:476px;width:84px;height:24px;background:#cbcbcb;border-left:1px solid #9a9a9a;border-top:1px solid #bdbdbd;border-right:1px solid #f4f4f4;border-bottom:1px solid #fff;"></div>
<div class="t" style="top:483.19px;font-size:11px;color:#000;letter-spacing:-0.25px;left:-253.00px;width:600px;text-align:center;">C - Capacitor</div>
<div class="r" style="left:1214px;top:70px;width:152px;height:440px;background:#b4b4b4;"></div>
<div class="t" style="top:75.09px;font-size:11px;color:#000;letter-spacing:-0.25px;left:991.00px;width:600px;text-align:center;">- Driver Parameters -</div>
<div class="r" style="left:1214px;top:93px;width:148px;height:187px;border:1px solid #9c9c9c;"></div>
<div class="r" style="left:1215px;top:94px;width:148px;height:187px;border:1px solid #fff;"></div>
<div class="r" style="left:1221px;top:89px;width:68px;height:11px;background:#b4b4b4;"></div>
<div class="t" style="top:88.99px;font-size:11px;color:#000;letter-spacing:-0.25px;left:1222.90px;">V(as) Method</div>
<div class="t" style="top:103.79px;font-size:11px;color:#000;letter-spacing:-0.25px;left:1221.80px;">Piston Diameter</div>
<div class="t" style="top:121.99px;font-size:11px;color:#000;letter-spacing:-0.25px;right:108.00px;">D =</div>
<div class="r" style="left:1262px;top:117px;width:48px;height:20px;background:#d2d2d2;border-top:2px solid #7c7c7c;border-left:2px solid #7c7c7c;border-bottom:1px solid #f4f4f4;border-right:1px solid #f4f4f4;"></div>
<div class="t" style="top:121.49px;font-size:11px;color:#000;letter-spacing:-0.25px;left:1268.00px;">16.5</div>
<div class="r" style="left:1316px;top:120px;width:39px;height:16px;background:#ababab;border-bottom:1px solid #f4f4f4;border-right:1px solid #f4f4f4;"></div>
<div class="t" style="top:122.79px;font-size:11px;color:#000;letter-spacing:-0.25px;left:1317.00px;">inches</div>
<svg style="left:1223px;top:138.5px" width="14" height="14"><circle cx="6.7" cy="7" r="5.2" fill="#fafafa" stroke="#9a9a9a" stroke-width="1"/></svg>
<div class="t" style="top:140.89px;font-size:11px;color:#000;letter-spacing:-0.25px;left:1240.30px;">Test Box Method</div>
<div class="t" style="top:157.69px;font-size:11px;color:#000;letter-spacing:-0.25px;right:108.00px;">V(B) =</div>
<div class="r" style="left:1262px;top:154px;width:48px;height:18px;background:#d2d2d2;border-top:2px solid #7c7c7c;border-left:2px solid #7c7c7c;border-bottom:1px solid #f4f4f4;border-right:1px solid #f4f4f4;"></div>
<div class="t" style="top:158.49px;font-size:11px;color:#000;letter-spacing:-0.25px;left:1268.00px;">5</div>
<div class="r" style="left:1316px;top:156.5px;width:39px;height:15.0px;background:#ababab;border-bottom:1px solid #f4f4f4;border-right:1px solid #f4f4f4;"></div>
<div class="t" style="top:159.29px;font-size:11px;color:#000;letter-spacing:-0.25px;left:1317.00px;">liters</div>
<svg style="left:1223px;top:173.7px" width="14" height="14"><circle cx="6.7" cy="7" r="5.2" fill="#fafafa" stroke="#9a9a9a" stroke-width="1"/><circle cx="6.7" cy="7" r="2" fill="#000"/></svg>
<div class="t" style="top:175.69px;font-size:11px;color:#000;letter-spacing:-0.25px;left:1239.70px;">Added Mass Method</div>
<div class="t" style="top:192.59px;font-size:11px;color:#000;letter-spacing:-0.25px;right:108.00px;">M =</div>
<div class="r" style="left:1262px;top:189px;width:48px;height:19px;background:#d2d2d2;border-top:2px solid #7c7c7c;border-left:2px solid #7c7c7c;border-bottom:1px solid #f4f4f4;border-right:1px solid #f4f4f4;"></div>
<div class="t" style="top:193.49px;font-size:11px;color:#000;letter-spacing:-0.25px;left:1268.00px;">250</div>
<div class="t" style="top:192.59px;font-size:11px;color:#000;letter-spacing:-0.25px;left:1315.60px;">grams</div>
<svg style="left:1223px;top:209.7px" width="14" height="14"><circle cx="6.7" cy="7" r="5.2" fill="#fafafa" stroke="#9a9a9a" stroke-width="1"/></svg>
<div class="t" style="top:211.49px;font-size:11px;color:#000;letter-spacing:-0.25px;left:1239.70px;">Specified SPL Method</div>
<div class="t" style="top:228.69px;font-size:11px;color:#000;letter-spacing:-0.25px;right:108.00px;">SPL =</div>
<div class="r" style="left:1262px;top:225.5px;width:48px;height:18.0px;background:#d2d2d2;border-top:2px solid #7c7c7c;border-left:2px solid #7c7c7c;border-bottom:1px solid #f4f4f4;border-right:1px solid #f4f4f4;"></div>
<div class="t" style="top:229.99px;font-size:11px;color:#000;letter-spacing:-0.25px;left:1268.00px;">94.29</div>
<div class="r" style="left:1316px;top:227.4px;width:39px;height:15.199999999999989px;background:#ababab;border-bottom:1px solid #f4f4f4;border-right:1px solid #f4f4f4;"></div>
<div class="t" style="top:230.19px;font-size:11px;color:#000;letter-spacing:-0.25px;left:1317.00px;">1W/1m</div>
<svg style="left:1223px;top:245.5px" width="14" height="14"><circle cx="6.7" cy="7" r="5.2" fill="#fafafa" stroke="#9a9a9a" stroke-width="1"/></svg>
<div class="t" style="top:247.79px;font-size:11px;color:#000;letter-spacing:-0.25px;left:1239.70px;">Specified M(md)</div>
<div class="t" style="top:264.49px;font-size:11px;color:#000;letter-spacing:-0.25px;right:108.00px;">M(md) =</div>
<div class="r" style="left:1262px;top:260.5px;width:48px;height:19.5px;background:#d2d2d2;border-top:2px solid #7c7c7c;border-left:2px solid #7c7c7c;border-bottom:1px solid #f4f4f4;border-right:1px solid #f4f4f4;"></div>
<div class="t" style="top:264.99px;font-size:11px;color:#000;letter-spacing:-0.25px;left:1268.00px;">0</div>
<div class="t" style="top:264.49px;font-size:11px;color:#000;letter-spacing:-0.25px;left:1315.60px;">grams</div>
<div class="r" style="left:1214px;top:288px;width:148px;height:179px;border:1px solid #9c9c9c;"></div>
<div class="r" style="left:1215px;top:289px;width:148px;height:179px;border:1px solid #fff;"></div>
<div class="r" style="left:1221px;top:284px;width:106px;height:11px;background:#b4b4b4;"></div>
<div class="t" style="top:284.19px;font-size:11px;color:#000;letter-spacing:-0.25px;left:1222.40px;">Measured Parameters</div>
<div class="t" style="top:303.39px;font-size:11px;color:#000;letter-spacing:-0.25px;right:108.50px;">R(e) =</div>
<div class="r" style="left:1262px;top:299.5px;width:48px;height:19.5px;background:#bdbdbd;border-top:2px solid #7c7c7c;border-left:2px solid #7c7c7c;border-bottom:1px solid #f4f4f4;border-right:1px solid #f4f4f4;"></div>
<div class="t" style="top:303.99px;font-size:11px;color:#000;letter-spacing:-0.25px;left:1268.00px;">6.928</div>
<div class="t" style="top:303.39px;font-size:11px;color:#000;letter-spacing:-0.25px;left:1315.60px;">Ohms</div>
<div class="t" style="top:324.29px;font-size:11px;color:#000;letter-spacing:-0.25px;right:108.50px;">F(s) =</div>
<div class="r" style="left:1262px;top:320.4px;width:48px;height:19.5px;background:#bdbdbd;border-top:2px solid #7c7c7c;border-left:2px solid #7c7c7c;border-bottom:1px solid #f4f4f4;border-right:1px solid #f4f4f4;"></div>
<div class="t" style="top:324.89px;font-size:11px;color:#000;letter-spacing:-0.25px;left:1268.00px;">43.74</div>
<div class="t" style="top:324.29px;font-size:11px;color:#000;letter-spacing:-0.25px;left:1315.60px;">Hz</div>
<div class="t" style="top:345.19px;font-size:11px;color:#000;letter-spacing:-0.25px;right:108.50px;">Q(ts) =</div>
<div class="r" style="left:1262px;top:341.3px;width:48px;height:19.5px;background:#bdbdbd;border-top:2px solid #7c7c7c;border-left:2px solid #7c7c7c;border-bottom:1px solid #f4f4f4;border-right:1px solid #f4f4f4;"></div>
<div class="t" style="top:345.79px;font-size:11px;color:#000;letter-spacing:-0.25px;left:1268.00px;">0.6204</div>
<div class="t" style="top:366.09px;font-size:11px;color:#000;letter-spacing:-0.25px;right:108.50px;">Q(es) =</div>
<div class="r" style="left:1262px;top:362.2px;width:48px;height:19.5px;background:#bdbdbd;border-top:2px solid #7c7c7c;border-left:2px solid #7c7c7c;border-bottom:1px solid #f4f4f4;border-right:1px solid #f4f4f4;"></div>
<div class="t" style="top:366.69px;font-size:11px;color:#000;letter-spacing:-0.25px;left:1268.00px;">0.7411</div>
<div class="t" style="top:386.99px;font-size:11px;color:#000;letter-spacing:-0.25px;right:108.50px;">Q(ms) =</div>
<div class="r" style="left:1262px;top:383.1px;width:48px;height:19.5px;background:#bdbdbd;border-top:2px solid #7c7c7c;border-left:2px solid #7c7c7c;border-bottom:1px solid #f4f4f4;border-right:1px solid #f4f4f4;"></div>
<div class="t" style="top:387.59px;font-size:11px;color:#000;letter-spacing:-0.25px;left:1268.00px;">3.811</div>
<div class="t" style="top:407.89px;font-size:11px;color:#000;letter-spacing:-0.25px;right:108.50px;">L(e) =</div>
<div class="r" style="left:1262px;top:404.0px;width:48px;height:19.5px;background:#bdbdbd;border-top:2px solid #7c7c7c;border-left:2px solid #7c7c7c;border-bottom:1px solid #f4f4f4;border-right:1px solid #f4f4f4;"></div>
<div class="t" style="top:408.49px;font-size:11px;color:#000;letter-spacing:-0.25px;left:1268.00px;">1.297</div>
<div class="r" style="left:1316px;top:405.5px;width:45px;height:16.0px;background:#ababab;border-bottom:1px solid #f4f4f4;border-right:1px solid #f4f4f4;"></div>
<div class="t" style="top:408.29px;font-size:11px;color:#000;letter-spacing:-0.25px;left:1317.00px;">mH (10k)</div>
<div class="t" style="top:428.79px;font-size:11px;color:#000;letter-spacing:-0.25px;right:108.50px;">M(ms) =</div>
<div class="r" style="left:1262px;top:424.9px;width:48px;height:19.5px;background:#bdbdbd;border-top:2px solid #7c7c7c;border-left:2px solid #7c7c7c;border-bottom:1px solid #f4f4f4;border-right:1px solid #f4f4f4;"></div>
<div class="t" style="top:429.39px;font-size:11px;color:#000;letter-spacing:-0.25px;left:1268.00px;">230.1</div>
<div class="t" style="top:428.79px;font-size:11px;color:#000;letter-spacing:-0.25px;left:1315.60px;">grams</div>
<div class="t" style="top:449.69px;font-size:11px;color:#000;letter-spacing:-0.25px;right:108.50px;">V(as) =</div>
<div class="r" style="left:1262px;top:445.79999999999995px;width:48px;height:19.5px;background:#bdbdbd;border-top:2px solid #7c7c7c;border-left:2px solid #7c7c7c;border-bottom:1px solid #f4f4f4;border-right:1px solid #f4f4f4;"></div>
<div class="t" style="top:450.29px;font-size:11px;color:#000;letter-spacing:-0.25px;left:1268.00px;">153.8</div>
<div class="r" style="left:1316px;top:447.29999999999995px;width:39px;height:16.0px;background:#ababab;border-bottom:1px solid #f4f4f4;border-right:1px solid #f4f4f4;"></div>
<div class="t" style="top:450.09px;font-size:11px;color:#000;letter-spacing:-0.25px;left:1317.00px;">liters</div>
<div class="r" style="left:1214px;top:475px;width:148px;height:32px;border:1px solid #9c9c9c;"></div>
<div class="r" style="left:1215px;top:476px;width:148px;height:32px;border:1px solid #fff;"></div>
<div class="r" style="left:1221px;top:471px;width:116px;height:11px;background:#b4b4b4;"></div>
<div class="t" style="top:471.69px;font-size:11px;color:#000;letter-spacing:-0.25px;left:1222.40px;">Test Lead Resistance</div>
<div class="t" style="top:490.19px;font-size:11px;color:#000;letter-spacing:-0.25px;right:108.50px;">R(t) =</div>
<div class="r" style="left:1262px;top:486px;width:48px;height:18.5px;background:#bdbdbd;border-top:2px solid #7c7c7c;border-left:2px solid #7c7c7c;border-bottom:1px solid #f4f4f4;border-right:1px solid #f4f4f4;"></div>
<div class="t" style="top:490.49px;font-size:11px;color:#000;letter-spacing:-0.25px;left:1268.00px;">0.5</div>
<div class="t" style="top:490.19px;font-size:11px;color:#000;letter-spacing:-0.25px;left:1315.60px;">Ohms</div>
<div style="position:absolute;left:366px;top:117px;width:635px;height:492px;overflow:hidden;background:#f0f0f0;">
<div class="r" style="left:0px;top:0px;width:635px;height:25px;background:#fff;"></div>
<div class="r" style="left:0px;top:0px;width:635px;height:492px;border:1px solid #fff;border-top:none;"></div>
<div class="t" style="top:6.48px;font-size:11.6px;color:#000;left:3.80px;">Driver Editor</div>
<svg style="left:615px;top:7px" width="12" height="12"><line x1="0.5" y1="0.5" x2="10.5" y2="10.5" stroke="#111" stroke-width="1"/><line x1="10.5" y1="0.5" x2="0.5" y2="10.5" stroke="#111" stroke-width="1"/></svg>
<div class="r" style="left:7px;top:53px;width:622px;height:403px;background:#f0f0f0;border-top:1px solid #fff;border-left:1px solid #fff;border-right:2px solid #7a7a7a;border-bottom:2px solid #7a7a7a;box-shadow:inset -1px -1px 0 #b4b4b4;"></div>
<div class="r" style="left:9px;top:35px;width:102px;height:19px;background:#f0f0f0;border-top:1px solid #fff;border-left:1px solid #fff;border-right:1px solid #c8c8c8;"></div>
<div class="t" style="top:38.99px;font-size:11px;color:#000;letter-spacing:-0.2px;left:14.50px;">General Information</div>
<div class="r" style="left:112px;top:33px;width:67px;height:21px;background:#f0f0f0;border-top:1px solid #fff;border-left:1px solid #fff;border-right:2px solid #7a7a7a;"></div>
<div class="t" style="top:36.99px;font-size:11px;color:#000;letter-spacing:-0.2px;left:118.60px;">Parameters</div>
<div class="r" style="left:179px;top:35px;width:173px;height:19px;background:#f0f0f0;border-top:1px solid #fff;border-right:2px solid #7a7a7a;"></div>
<div class="t" style="top:38.99px;font-size:11px;color:#000;letter-spacing:-0.2px;left:183.20px;">Physical and Mounting Information</div>
<div class="t" style="top:64.59px;left:-228.00px;width:400px;text-align:right;font-size:11px;color:#000;letter-spacing:-0.2px;">Manufacturer:</div>
<div class="r" style="left:181px;top:62px;width:3px;height:12px;background:#0a78d8;border-right:1px solid #1a3050;"></div>
<div class="t" style="top:80.79px;left:-228.00px;width:400px;text-align:right;font-size:11px;color:#000;letter-spacing:-0.2px;">Model:</div>
<div class="t" style="top:96.99px;left:-227.30px;width:400px;text-align:right;font-size:11px;color:#000;letter-spacing:-0.2px;">Nominal Diameter =</div>
<div class="t" style="top:96.99px;font-size:11px;color:#000;letter-spacing:-0.2px;left:181.70px;">0</div>
<div class="t" style="top:96.99px;font-size:11px;color:#000;letter-spacing:-0.2px;left:217.50px;">mm</div>
<div class="t" style="top:96.99px;font-size:11px;color:#000;letter-spacing:-0.2px;left:252.80px;">(&nbsp;0</div>
<div class="t" style="top:96.99px;font-size:11px;color:#000;letter-spacing:-0.2px;left:296.60px;">inches)</div>
<div class="r" style="left:12px;top:113px;width:613px;height:2px;background:#7a7a7a;"></div>
<div class="r" style="left:303px;top:114px;width:2px;height:333px;background:#7a7a7a;"></div>
<div class="t" style="left:-43.00px;top:239.31px;font-size:48px;font-style:italic;color:#a9a9a9;transform-origin:0px 40.63px;transform:rotate(-3.37deg) scaleX(1.4);">www.</div>
<div class="t" style="left:117.00px;top:229.90px;font-size:48px;font-style:italic;color:#a9a9a9;transform-origin:0px 40.63px;transform:rotate(-3.37deg) scaleX(1.135);">hippoaudiooutlet.com</div>
<div class="t" style="top:121.39px;left:-264.50px;width:400px;text-align:right;font-size:11px;color:#000;letter-spacing:-0.2px;">Resonance in Free Air</div>
<div class="t" style="top:121.39px;left:-210.50px;width:400px;text-align:right;font-size:11px;color:#000;letter-spacing:-0.2px;">f(s) =</div>
<div class="t" style="top:121.39px;font-size:11px;color:#000;letter-spacing:-0.2px;left:198.40px;">43.739</div>
<div class="t" style="top:121.39px;font-size:11px;color:#000;letter-spacing:-0.2px;left:241.70px;">Hz</div>
<div class="t" style="top:137.60px;left:-264.50px;width:400px;text-align:right;font-size:11px;color:#000;letter-spacing:-0.2px;">Resonance on Baffle</div>
<div class="t" style="top:137.60px;left:-210.50px;width:400px;text-align:right;font-size:11px;color:#000;letter-spacing:-0.2px;">f(sb) =</div>
<div class="t" style="top:137.60px;font-size:11px;color:#000;letter-spacing:-0.2px;left:198.40px;">0</div>
<div class="t" style="top:137.60px;font-size:11px;color:#000;letter-spacing:-0.2px;left:241.70px;">Hz</div>
<div class="t" style="top:153.81px;left:-264.50px;width:400px;text-align:right;font-size:11px;color:#000;letter-spacing:-0.2px;">Total Q</div>
<div class="t" style="top:153.81px;left:-210.50px;width:400px;text-align:right;font-size:11px;color:#000;letter-spacing:-0.2px;">Q(ts) =</div>
<div class="t" style="top:153.81px;font-size:11px;color:#000;letter-spacing:-0.2px;left:198.40px;">0.62044</div>
<div class="t" style="top:170.02px;left:-264.50px;width:400px;text-align:right;font-size:11px;color:#000;letter-spacing:-0.2px;">Electrical Q</div>
<div class="t" style="top:170.02px;left:-210.50px;width:400px;text-align:right;font-size:11px;color:#000;letter-spacing:-0.2px;">Q(es) =</div>
<div class="t" style="top:170.02px;font-size:11px;color:#000;letter-spacing:-0.2px;left:198.40px;">0.74108</div>
<div class="t" style="top:186.23px;left:-264.50px;width:400px;text-align:right;font-size:11px;color:#000;letter-spacing:-0.2px;">Mechanical Q</div>
<div class="t" style="top:186.23px;left:-210.50px;width:400px;text-align:right;font-size:11px;color:#000;letter-spacing:-0.2px;">Q(ms) =</div>
<div class="t" style="top:186.23px;font-size:11px;color:#000;letter-spacing:-0.2px;left:198.40px;">3.8114</div>
<div class="t" style="top:202.44px;left:-264.50px;width:400px;text-align:right;font-size:11px;color:#000;letter-spacing:-0.2px;">Equivalent Volume</div>
<div class="t" style="top:202.44px;left:-210.50px;width:400px;text-align:right;font-size:11px;color:#000;letter-spacing:-0.2px;">V(as) =</div>
<div class="t" style="top:202.44px;font-size:11px;color:#000;letter-spacing:-0.2px;left:198.40px;">153.79</div>
<div class="t" style="top:202.44px;font-size:11px;color:#000;letter-spacing:-0.2px;left:241.70px;">liters</div>
<div class="t" style="top:218.65px;left:-210.50px;width:400px;text-align:right;font-size:11px;color:#000;letter-spacing:-0.2px;">V(as) =</div>
<div class="t" style="top:218.65px;font-size:11px;color:#000;letter-spacing:-0.2px;left:198.40px;">5.4309</div>
<div class="t" style="top:218.65px;font-size:11px;color:#000;letter-spacing:-0.2px;left:241.70px;">cu ft</div>
<div class="t" style="top:234.86px;left:-264.50px;width:400px;text-align:right;font-size:11px;color:#000;letter-spacing:-0.2px;">Compliance</div>
<div class="t" style="top:234.86px;left:-210.50px;width:400px;text-align:right;font-size:11px;color:#000;letter-spacing:-0.2px;">C(ms) =</div>
<div class="t" style="top:234.86px;font-size:11px;color:#000;letter-spacing:-0.2px;left:198.40px;">0.058</div>
<div class="t" style="top:234.86px;font-size:11px;color:#000;letter-spacing:-0.2px;left:241.70px;">mm/N</div>
<div class="t" style="top:251.07px;left:-264.50px;width:400px;text-align:right;font-size:11px;color:#000;letter-spacing:-0.2px;">Mechanical Resistance</div>
<div class="t" style="top:251.07px;left:-210.50px;width:400px;text-align:right;font-size:11px;color:#000;letter-spacing:-0.2px;">R(ms) =</div>
<div class="t" style="top:251.07px;font-size:11px;color:#000;letter-spacing:-0.2px;left:198.40px;">0</div>
<div class="t" style="top:251.07px;font-size:11px;color:#000;letter-spacing:-0.2px;left:241.70px;">kg/s</div>
<div class="t" style="top:267.28px;left:-264.50px;width:400px;text-align:right;font-size:11px;color:#000;letter-spacing:-0.2px;">DC Resistance</div>
<div class="t" style="top:267.28px;left:-210.50px;width:400px;text-align:right;font-size:11px;color:#000;letter-spacing:-0.2px;">R(e) =</div>
<div class="t" style="top:267.28px;font-size:11px;color:#000;letter-spacing:-0.2px;left:198.40px;">6.9283</div>
<div class="t" style="top:267.28px;font-size:11px;color:#000;letter-spacing:-0.2px;left:241.70px;">Ohms</div>
<div class="t" style="top:283.49px;left:-264.50px;width:400px;text-align:right;font-size:11px;color:#000;letter-spacing:-0.2px;">Maximum Impedance</div>
<div class="t" style="top:283.49px;left:-210.50px;width:400px;text-align:right;font-size:11px;color:#000;letter-spacing:-0.2px;">Z(max) =</div>
<div class="t" style="top:283.49px;font-size:11px;color:#000;letter-spacing:-0.2px;left:198.40px;">42.561</div>
<div class="t" style="top:283.49px;font-size:11px;color:#000;letter-spacing:-0.2px;left:241.70px;">Ohms</div>
<div class="t" style="top:299.70px;left:-264.50px;width:400px;text-align:right;font-size:11px;color:#000;letter-spacing:-0.2px;">Minimum Impedance</div>
<div class="t" style="top:299.70px;left:-210.50px;width:400px;text-align:right;font-size:11px;color:#000;letter-spacing:-0.2px;">Z(min) =</div>
<div class="t" style="top:299.70px;font-size:11px;color:#000;letter-spacing:-0.2px;left:198.40px;">6.9283</div>
<div class="t" style="top:299.70px;font-size:11px;color:#000;letter-spacing:-0.2px;left:241.70px;">Ohms</div>
<div class="t" style="top:315.91px;left:-264.50px;width:400px;text-align:right;font-size:11px;color:#000;letter-spacing:-0.2px;">Max Thermal Power</div>
<div class="t" style="top:315.91px;left:-210.50px;width:400px;text-align:right;font-size:11px;color:#000;letter-spacing:-0.2px;">P(t) =</div>
<div class="t" style="top:315.91px;font-size:11px;color:#000;letter-spacing:-0.2px;left:198.40px;">0</div>
<div class="t" style="top:315.91px;font-size:11px;color:#000;letter-spacing:-0.2px;left:241.70px;">&nbsp;Watts</div>
<div class="t" style="top:332.12px;left:-264.50px;width:400px;text-align:right;font-size:11px;color:#000;letter-spacing:-0.2px;">Thermal Resistance</div>
<div class="t" style="top:332.12px;left:-210.50px;width:400px;text-align:right;font-size:11px;color:#000;letter-spacing:-0.2px;">R(t) =</div>
<div class="t" style="top:332.12px;font-size:11px;color:#000;letter-spacing:-0.2px;left:198.40px;">0</div>
<div class="t" style="top:332.12px;font-size:11px;color:#000;letter-spacing:-0.2px;left:241.70px;">deg C/W</div>
<div class="t" style="top:348.33px;left:-264.50px;width:400px;text-align:right;font-size:11px;color:#000;letter-spacing:-0.2px;">Max Linear Excursion</div>
<div class="t" style="top:348.33px;left:-210.50px;width:400px;text-align:right;font-size:11px;color:#000;letter-spacing:-0.2px;">X(max) =</div>
<div class="t" style="top:348.33px;font-size:11px;color:#000;letter-spacing:-0.2px;left:198.40px;">0</div>
<div class="t" style="top:348.33px;font-size:11px;color:#000;letter-spacing:-0.2px;left:241.70px;">mm, peak</div>
<div class="t" style="top:364.54px;left:-264.50px;width:400px;text-align:right;font-size:11px;color:#000;letter-spacing:-0.2px;">Max Excursion</div>
<div class="t" style="top:364.54px;left:-210.50px;width:400px;text-align:right;font-size:11px;color:#000;letter-spacing:-0.2px;">X(peak) =</div>
<div class="t" style="top:364.54px;font-size:11px;color:#000;letter-spacing:-0.2px;left:198.40px;">0</div>
<div class="t" style="top:364.54px;font-size:11px;color:#000;letter-spacing:-0.2px;left:241.70px;">mm, peak</div>
<div class="t" style="top:380.75px;left:-264.50px;width:400px;text-align:right;font-size:11px;color:#000;letter-spacing:-0.2px;">Piston Area</div>
<div class="t" style="top:380.75px;left:-210.50px;width:400px;text-align:right;font-size:11px;color:#000;letter-spacing:-0.2px;">S(D) =</div>
<div class="t" style="top:380.75px;font-size:11px;color:#000;letter-spacing:-0.2px;left:198.40px;">0.13795</div>
<div class="t" style="top:380.75px;font-size:11px;color:#000;letter-spacing:-0.2px;left:264.40px;">sq m</div>
<div class="t" style="top:396.96px;left:-264.50px;width:400px;text-align:right;font-size:11px;color:#000;letter-spacing:-0.2px;">Peak Volume Displ</div>
<div class="t" style="top:396.96px;left:-210.50px;width:400px;text-align:right;font-size:11px;color:#000;letter-spacing:-0.2px;">V(D) =</div>
<div class="t" style="top:396.96px;font-size:11px;color:#000;letter-spacing:-0.2px;left:198.40px;">0</div>
<div class="t" style="top:396.96px;font-size:11px;color:#000;letter-spacing:-0.2px;left:241.70px;">liters</div>
<div class="t" style="top:413.17px;font-size:11px;color:#000;letter-spacing:-0.2px;left:43.40px;">Sensitivity</div>
<div class="t" style="top:413.17px;left:-255.70px;width:400px;text-align:right;font-size:11px;color:#000;letter-spacing:-0.2px;">SPL =</div>
<div class="t" style="top:413.17px;font-size:11px;color:#000;letter-spacing:-0.2px;left:153.20px;">94.29</div>
<div class="t" style="top:413.17px;font-size:11px;color:#000;letter-spacing:-0.2px;left:196.40px;">dB SPL (1W/1m)</div>
<div class="t" style="top:429.38px;left:-255.70px;width:400px;text-align:right;font-size:11px;color:#000;letter-spacing:-0.2px;">SPL =</div>
<div class="t" style="top:429.38px;font-size:11px;color:#000;letter-spacing:-0.2px;left:153.20px;">94.915</div>
<div class="t" style="top:429.38px;font-size:11px;color:#000;letter-spacing:-0.2px;left:196.40px;">dB SPL (2.83Vrms)</div>
<div class="t" style="top:121.39px;left:18.40px;width:400px;text-align:right;font-size:11px;color:#000;letter-spacing:-0.2px;">Reference Efficiency</div>
<div class="t" style="top:121.39px;left:72.70px;width:400px;text-align:right;font-size:11px;color:#000;letter-spacing:-0.2px;">n(0) =</div>
<div class="t" style="top:121.39px;font-size:11px;color:#000;letter-spacing:-0.2px;left:481.80px;">1.6557</div>
<div class="t" style="top:121.39px;font-size:11px;color:#000;letter-spacing:-0.2px;left:525.10px;">%</div>
<div class="t" style="top:137.60px;left:18.40px;width:400px;text-align:right;font-size:11px;color:#000;letter-spacing:-0.2px;">Voice Coil Inductance</div>
<div class="t" style="top:137.60px;left:72.70px;width:400px;text-align:right;font-size:11px;color:#000;letter-spacing:-0.2px;">L(e) =</div>
<div class="t" style="top:137.60px;font-size:11px;color:#000;letter-spacing:-0.2px;left:481.80px;">3.738</div>
<div class="t" style="top:137.60px;font-size:11px;color:#000;letter-spacing:-0.2px;left:525.10px;">mH (1k Hz)</div>
<div class="t" style="top:153.81px;left:72.70px;width:400px;text-align:right;font-size:11px;color:#000;letter-spacing:-0.2px;">L(e) =</div>
<div class="t" style="top:153.81px;font-size:11px;color:#000;letter-spacing:-0.2px;left:481.80px;">1.2966</div>
<div class="t" style="top:153.81px;font-size:11px;color:#000;letter-spacing:-0.2px;left:525.10px;">mH (10k Hz)</div>
<div class="t" style="top:170.02px;left:18.40px;width:400px;text-align:right;font-size:11px;color:#000;letter-spacing:-0.2px;">Flux Density</div>
<div class="t" style="top:170.02px;left:72.70px;width:400px;text-align:right;font-size:11px;color:#000;letter-spacing:-0.2px;">B =</div>
<div class="t" style="top:170.02px;font-size:11px;color:#000;letter-spacing:-0.2px;left:481.80px;">0</div>
<div class="t" style="top:170.02px;font-size:11px;color:#000;letter-spacing:-0.2px;left:525.10px;">Tesla</div>
<div class="t" style="top:186.23px;left:18.40px;width:400px;text-align:right;font-size:11px;color:#000;letter-spacing:-0.2px;">Length of Wire in Gap</div>
<div class="t" style="top:186.23px;left:72.70px;width:400px;text-align:right;font-size:11px;color:#000;letter-spacing:-0.2px;">L =</div>
<div class="t" style="top:186.23px;font-size:11px;color:#000;letter-spacing:-0.2px;left:481.80px;">0</div>
<div class="t" style="top:186.23px;font-size:11px;color:#000;letter-spacing:-0.2px;left:525.10px;">meters</div>
<div class="t" style="top:202.44px;left:18.40px;width:400px;text-align:right;font-size:11px;color:#000;letter-spacing:-0.2px;">BL Product</div>
<div class="t" style="top:202.44px;left:72.70px;width:400px;text-align:right;font-size:11px;color:#000;letter-spacing:-0.2px;">BL =</div>
<div class="t" style="top:202.44px;font-size:11px;color:#000;letter-spacing:-0.2px;left:481.80px;">24.315</div>
<div class="t" style="top:202.44px;font-size:11px;color:#000;letter-spacing:-0.2px;left:525.10px;">N/Amp</div>
<div class="t" style="top:218.65px;left:18.40px;width:400px;text-align:right;font-size:11px;color:#000;letter-spacing:-0.2px;">Effective Moving Mass</div>
<div class="t" style="top:218.65px;left:72.70px;width:400px;text-align:right;font-size:11px;color:#000;letter-spacing:-0.2px;">M(ms) =</div>
<div class="t" style="top:218.65px;font-size:11px;color:#000;letter-spacing:-0.2px;left:481.80px;">230.12</div>
<div class="t" style="top:218.65px;font-size:11px;color:#000;letter-spacing:-0.2px;left:525.10px;">grams</div>
<div class="t" style="top:234.86px;left:18.40px;width:400px;text-align:right;font-size:11px;color:#000;letter-spacing:-0.2px;">Voice Coil Diameter</div>
<div class="t" style="top:234.86px;left:72.70px;width:400px;text-align:right;font-size:11px;color:#000;letter-spacing:-0.2px;">D(vc) =</div>
<div class="t" style="top:234.86px;font-size:11px;color:#000;letter-spacing:-0.2px;left:481.80px;">0</div>
<div class="t" style="top:234.86px;font-size:11px;color:#000;letter-spacing:-0.2px;left:525.10px;">mm</div>
<div class="t" style="top:251.07px;left:72.70px;width:400px;text-align:right;font-size:11px;color:#000;letter-spacing:-0.2px;">D(vc) =</div>
<div class="t" style="top:251.07px;font-size:11px;color:#000;letter-spacing:-0.2px;left:481.80px;">0</div>
<div class="t" style="top:251.07px;font-size:11px;color:#000;letter-spacing:-0.2px;left:525.10px;">in</div>
<div class="t" style="top:267.28px;left:18.40px;width:400px;text-align:right;font-size:11px;color:#000;letter-spacing:-0.2px;">Voice Coil Depth</div>
<div class="t" style="top:267.28px;left:72.70px;width:400px;text-align:right;font-size:11px;color:#000;letter-spacing:-0.2px;">D(cd) =</div>
<div class="t" style="top:267.28px;font-size:11px;color:#000;letter-spacing:-0.2px;left:481.80px;">0</div>
<div class="t" style="top:267.28px;font-size:11px;color:#000;letter-spacing:-0.2px;left:525.10px;">mm</div>
<div class="t" style="top:283.49px;left:18.40px;width:400px;text-align:right;font-size:11px;color:#000;letter-spacing:-0.2px;">Magnetic Gap Depth</div>
<div class="t" style="top:283.49px;left:72.70px;width:400px;text-align:right;font-size:11px;color:#000;letter-spacing:-0.2px;">D(mg) =</div>
<div class="t" style="top:283.49px;font-size:11px;color:#000;letter-spacing:-0.2px;left:481.80px;">0</div>
<div class="t" style="top:283.49px;font-size:11px;color:#000;letter-spacing:-0.2px;left:525.10px;">mm</div>
<div class="t" style="top:299.70px;left:71.60px;width:400px;text-align:right;font-size:11px;color:#000;letter-spacing:-0.2px;">Voice Coil Material:</div>
<div class="t" style="top:315.91px;left:71.60px;width:400px;text-align:right;font-size:11px;color:#000;letter-spacing:-0.2px;">Voice Coil Former:</div>
<div class="t" style="top:332.12px;left:71.60px;width:400px;text-align:right;font-size:11px;color:#000;letter-spacing:-0.2px;">Voice Coil Layers:</div>
<div class="t" style="top:348.33px;left:71.60px;width:400px;text-align:right;font-size:11px;color:#000;letter-spacing:-0.2px;">Voice Coil Wire Gauge:</div>
<div class="t" style="top:364.54px;left:71.60px;width:400px;text-align:right;font-size:11px;color:#000;letter-spacing:-0.2px;">Voice Coil Vent:</div>
<div class="t" style="top:380.75px;font-size:11px;color:#000;letter-spacing:-0.2px;left:309.60px;">Wright Parameters:</div>
<div class="t" style="top:380.75px;left:72.70px;width:400px;text-align:right;font-size:11px;color:#000;letter-spacing:-0.2px;">K(r) =</div>
<div class="t" style="top:380.75px;font-size:11px;color:#000;letter-spacing:-0.2px;left:481.80px;">0.096977</div>
<div class="t" style="top:396.96px;left:72.70px;width:400px;text-align:right;font-size:11px;color:#000;letter-spacing:-0.2px;">X(r) =</div>
<div class="t" style="top:396.96px;font-size:11px;color:#000;letter-spacing:-0.2px;left:481.80px;">0.56731</div>
<div class="t" style="top:413.17px;left:72.70px;width:400px;text-align:right;font-size:11px;color:#000;letter-spacing:-0.2px;">K(i) =</div>
<div class="t" style="top:413.17px;font-size:11px;color:#000;letter-spacing:-0.2px;left:481.80px;">0.020478</div>
<div class="t" style="top:429.38px;left:72.70px;width:400px;text-align:right;font-size:11px;color:#000;letter-spacing:-0.2px;">X(i) =</div>
<div class="t" style="top:429.38px;font-size:11px;color:#000;letter-spacing:-0.2px;left:481.80px;">0.72913</div>
<div class="r" style="left:392px;top:462px;width:75px;height:23px;border:1px solid #000;"></div>
<div class="r" style="left:393px;top:463px;width:73px;height:21px;background:#f0f0f0;border-top:1px solid #fff;border-left:1px solid #fff;border-right:1px solid #6a6a6a;border-bottom:1px solid #6a6a6a;box-shadow:inset -1px -1px 0 #a0a0a0;"></div>
<div class="t" style="top:467.69px;left:392px;width:75px;text-align:center;font-size:11px;letter-spacing:-0.2px;">OK</div>
<div class="r" style="left:473px;top:462px;width:75px;height:23px;background:#f0f0f0;border-top:1px solid #fff;border-left:1px solid #fff;border-right:1px solid #6a6a6a;border-bottom:1px solid #6a6a6a;box-shadow:inset -1px -1px 0 #a0a0a0;"></div>
<div class="t" style="top:467.69px;left:473px;width:75px;text-align:center;font-size:11px;letter-spacing:-0.2px;">Cancel</div>
<div class="r" style="left:554px;top:462px;width:75px;height:23px;background:#f0f0f0;border-top:1px solid #fff;border-left:1px solid #fff;border-right:1px solid #6a6a6a;border-bottom:1px solid #6a6a6a;box-shadow:inset -1px -1px 0 #a0a0a0;"></div>
<div class="t" style="top:467.69px;left:554px;width:75px;text-align:center;font-size:11px;letter-spacing:-0.2px;">Help</div>
</div>
</body></html>
